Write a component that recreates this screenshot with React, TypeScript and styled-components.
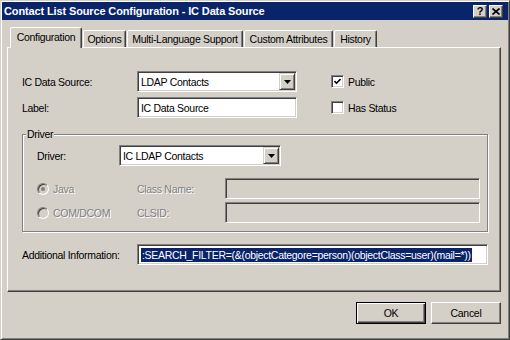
import styled, { createGlobalStyle } from 'styled-components';

const GlobalStyle = createGlobalStyle`
  body {
    margin: 0;
    background: #ffffff;
  }
  * {
    box-sizing: border-box;
  }
`;

const FACE = '#d4d0c8';
const SHADOW = '#808080';
const DARK = '#404040';
const NAVY = '#0a246a';

const Window = styled.div`
  width: 510px;
  height: 340px;
  background: ${FACE};
  border: 1px solid;
  border-color: ${FACE} ${DARK} ${DARK} ${FACE};
  box-shadow: inset 1px 1px #ffffff, inset -1px -1px ${SHADOW};
  padding: 1px;
  display: flex;
  flex-direction: column;
  font-family: 'Liberation Sans', Arial, sans-serif;
  font-size: 10.5px;
  letter-spacing: -0.3px;
  color: #000;
`;

const TitleBar = styled.div`
  height: 18px;
  background: ${NAVY};
  display: flex;
  align-items: center;
  padding: 0 5px 0 2px;
`;

const Title = styled.div`
  flex: 1;
  color: #ffffff;
  font-weight: bold;
  font-size: 11px;
  letter-spacing: -0.13px;
`;

const TitleButton = styled.div`
  width: 14px;
  height: 13px;
  margin-left: 2px;
  background: ${FACE};
  border: 1px solid;
  border-color: #ffffff ${DARK} ${DARK} #ffffff;
  box-shadow: inset -1px -1px ${SHADOW};
  display: flex;
  align-items: center;
  justify-content: center;
  font-weight: bold;
  font-size: 11px;
  letter-spacing: 0;
  line-height: 1;
`;

const Body = styled.div`
  flex: 1;
  display: flex;
  flex-direction: column;
  padding: 7px 7px 14px 5px;
`;

const TabStrip = styled.div`
  height: 20px;
  display: flex;
  align-items: flex-end;
  gap: 1px;
  padding-left: 3px;
  position: relative;
  z-index: 2;
`;

const Tab = styled.div<{ $w: number; $active?: boolean }>`
  width: ${(p) => p.$w}px;
  height: ${(p) => (p.$active ? 21 : 17)}px;
  margin-bottom: ${(p) => (p.$active ? -1 : 0)}px;
  background: ${FACE};
  border: 1px solid;
  border-bottom: none;
  border-color: #ffffff ${DARK} transparent #ffffff;
  border-radius: 2px 2px 0 0;
  box-shadow: inset -1px 0 ${SHADOW};
  display: flex;
  align-items: ${(p) => (p.$active ? 'flex-start' : 'center')};
  justify-content: center;
  padding-top: ${(p) => (p.$active ? 3 : 0)}px;
  white-space: nowrap;
`;

const Panel = styled.div`
  flex: 1;
  background: ${FACE};
  border: 1px solid;
  border-color: #ffffff ${DARK} ${DARK} #ffffff;
  box-shadow: inset -1px -1px ${SHADOW};
  padding: 23px 0 0 14px;
  display: flex;
  flex-direction: column;
`;

const Row = styled.div<{ $gap?: number }>`
  display: flex;
  align-items: center;
  height: 21px;
  margin-top: ${(p) => p.$gap ?? 0}px;
`;

const Label = styled.div<{ $w: number; $disabled?: boolean }>`
  width: ${(p) => p.$w}px;
  flex-shrink: 0;
  white-space: nowrap;
  color: ${(p) => (p.$disabled ? SHADOW : '#000')};
  text-shadow: ${(p) => (p.$disabled ? '1px 1px #ffffff' : 'none')};
`;

const Sunken = styled.div<{ $w: number; $disabled?: boolean }>`
  width: ${(p) => p.$w}px;
  height: 21px;
  flex-shrink: 0;
  background: ${(p) => (p.$disabled ? FACE : '#ffffff')};
  border: 1px solid;
  border-color: ${SHADOW} #ffffff #ffffff ${SHADOW};
  box-shadow: inset 1px 1px ${DARK}, inset -1px -1px ${FACE};
  display: flex;
  align-items: center;
  padding: 0 2px 0 3px;
  white-space: nowrap;
  overflow: hidden;
`;

const ComboText = styled.div`
  flex: 1;
  overflow: hidden;
`;

const DropButton = styled.div`
  width: 16px;
  height: 17px;
  margin-right: -1px;
  background: ${FACE};
  border: 1px solid;
  border-color: ${FACE} ${DARK} ${DARK} ${FACE};
  box-shadow: inset 1px 1px #ffffff, inset -1px -1px ${SHADOW};
  display: flex;
  align-items: center;
  justify-content: center;
`;

const Selected = styled.span`
  background: ${NAVY};
  color: #ffffff;
  padding: 1px 1px 1px 1px;
`;

const Check = styled.div`
  display: flex;
  align-items: center;
  gap: 4px;
  margin-left: 34px;
`;

const CheckBox = styled.div`
  width: 13px;
  height: 13px;
  background: #ffffff;
  border: 1px solid;
  border-color: ${SHADOW} #ffffff #ffffff ${SHADOW};
  box-shadow: inset 1px 1px ${DARK}, inset -1px -1px ${FACE};
  display: flex;
  align-items: center;
  justify-content: center;
`;

const Group = styled.div`
  position: relative;
  width: 466px;
  height: 98px;
  margin-top: 16px;
  border: 1px solid ${SHADOW};
  box-shadow: inset 1px 1px #ffffff, 1px 1px #ffffff;
  padding: 10px 0 0 14px;
  display: flex;
  flex-direction: column;
`;

const Legend = styled.div`
  position: absolute;
  top: -7px;
  left: 3px;
  padding: 0 1px;
  background: ${FACE};
`;

const Radio = styled.div`
  width: 100px;
  flex-shrink: 0;
  display: flex;
  align-items: center;
  gap: 4px;
`;

const RadioDot = styled.div<{ $on?: boolean }>`
  width: 12px;
  height: 12px;
  border-radius: 50%;
  background: ${FACE};
  border: 1px solid;
  border-color: ${SHADOW} #ffffff #ffffff ${SHADOW};
  box-shadow: inset 1px 1px ${DARK};
  display: flex;
  align-items: center;
  justify-content: center;
  &::after {
    content: '';
    width: 4px;
    height: 4px;
    border-radius: 50%;
    background: ${(p) => (p.$on ? SHADOW : 'transparent')};
  }
`;

const Footer = styled.div`
  display: flex;
  justify-content: flex-end;
  gap: 5px;
  padding-top: 10px;
`;

const Button = styled.div<{ $default?: boolean }>`
  width: 70px;
  height: 22px;
  background: ${FACE};
  border: 1px solid;
  border-color: ${(p) => (p.$default ? '#000' : '#ffffff')} ${(p) => (p.$default ? '#000' : DARK)}
    ${(p) => (p.$default ? '#000' : DARK)} ${(p) => (p.$default ? '#000' : '#ffffff')};
  box-shadow: ${(p) =>
    p.$default
      ? `inset 1px 1px #ffffff, inset -1px -1px ${DARK}, inset -2px -2px ${SHADOW}`
      : `inset -1px -1px ${SHADOW}`};
  display: flex;
  align-items: center;
  justify-content: center;
`;

const Arrow = () => (
  <svg width="7" height="4" viewBox="0 0 7 4">
    <polygon points="0,0 7,0 3.5,4" fill="#000" />
  </svg>
);

const Combo = ({ w, text }: { w: number; text: string }) => (
  <Sunken $w={w}>
    <ComboText>{text}</ComboText>
    <DropButton>
      <Arrow />
    </DropButton>
  </Sunken>
);

const tabs = [
  { name: 'Configuration', w: 72 },
  { name: 'Options', w: 43 },
  { name: 'Multi-Language Support', w: 116 },
  { name: 'Custom Attributes', w: 89 },
  { name: 'History', w: 43 },
];

export default function App() {
  return (
    <>
      <GlobalStyle />
      <Window>
        <TitleBar>
          <Title>Contact List Source Configuration - IC Data Source</Title>
          <TitleButton>?</TitleButton>
          <TitleButton>
            <svg width="8" height="7" viewBox="0 0 8 7">
              <path d="M0.5 0.5 L7.5 6.5 M7.5 0.5 L0.5 6.5" stroke="#000" strokeWidth="1.6" />
            </svg>
          </TitleButton>
        </TitleBar>
        <Body>
          <TabStrip>
            {tabs.map((t, i) => (
              <Tab key={t.name} $w={t.w} $active={i === 0}>
                {t.name}
              </Tab>
            ))}
          </TabStrip>
          <Panel>
            <Row>
              <Label $w={115}>IC Data Source:</Label>
              <Combo w={160} text="LDAP Contacts" />
              <Check>
                <CheckBox>
                  <svg width="7" height="7" viewBox="0 0 7 7">
                    <polyline points="0.5,3 2.5,5.2 6.5,1" fill="none" stroke="#000" strokeWidth="1.6" />
                  </svg>
                </CheckBox>
                Public
              </Check>
            </Row>
            <Row $gap={5}>
              <Label $w={115}>Label:</Label>
              <Sunken $w={160}>IC Data Source</Sunken>
              <Check>
                <CheckBox />
                Has Status
              </Check>
            </Row>
            <Group>
              <Legend>Driver</Legend>
              <Row>
                <Label $w={82}>Driver:</Label>
                <Combo w={162} text="IC LDAP Contacts" />
              </Row>
              <Row $gap={12}>
                <Radio>
                  <RadioDot $on />
                  <Label $w={60} $disabled>
                    Java
                  </Label>
                </Radio>
                <Label $w={88} $disabled>
                  Class Name:
                </Label>
                <Sunken $w={255} $disabled />
              </Row>
              <Row $gap={3}>
                <Radio>
                  <RadioDot />
                  <Label $w={60} $disabled>
                    COM/DCOM
                  </Label>
                </Radio>
                <Label $w={88} $disabled>
                  CLSID:
                </Label>
                <Sunken $w={255} $disabled />
              </Row>
            </Group>
            <Row $gap={12}>
              <Label $w={115}>Additional Information:</Label>
              <Sunken $w={351}>
                <Selected>:SEARCH_FILTER=(&amp;(objectCategore=person)(objectClass=user)(mail=*))</Selected>
              </Sunken>
            </Row>
          </Panel>
          <Footer>
            <Button $default>OK</Button>
            <Button>Cancel</Button>
          </Footer>
        </Body>
      </Window>
    </>
  );
}
